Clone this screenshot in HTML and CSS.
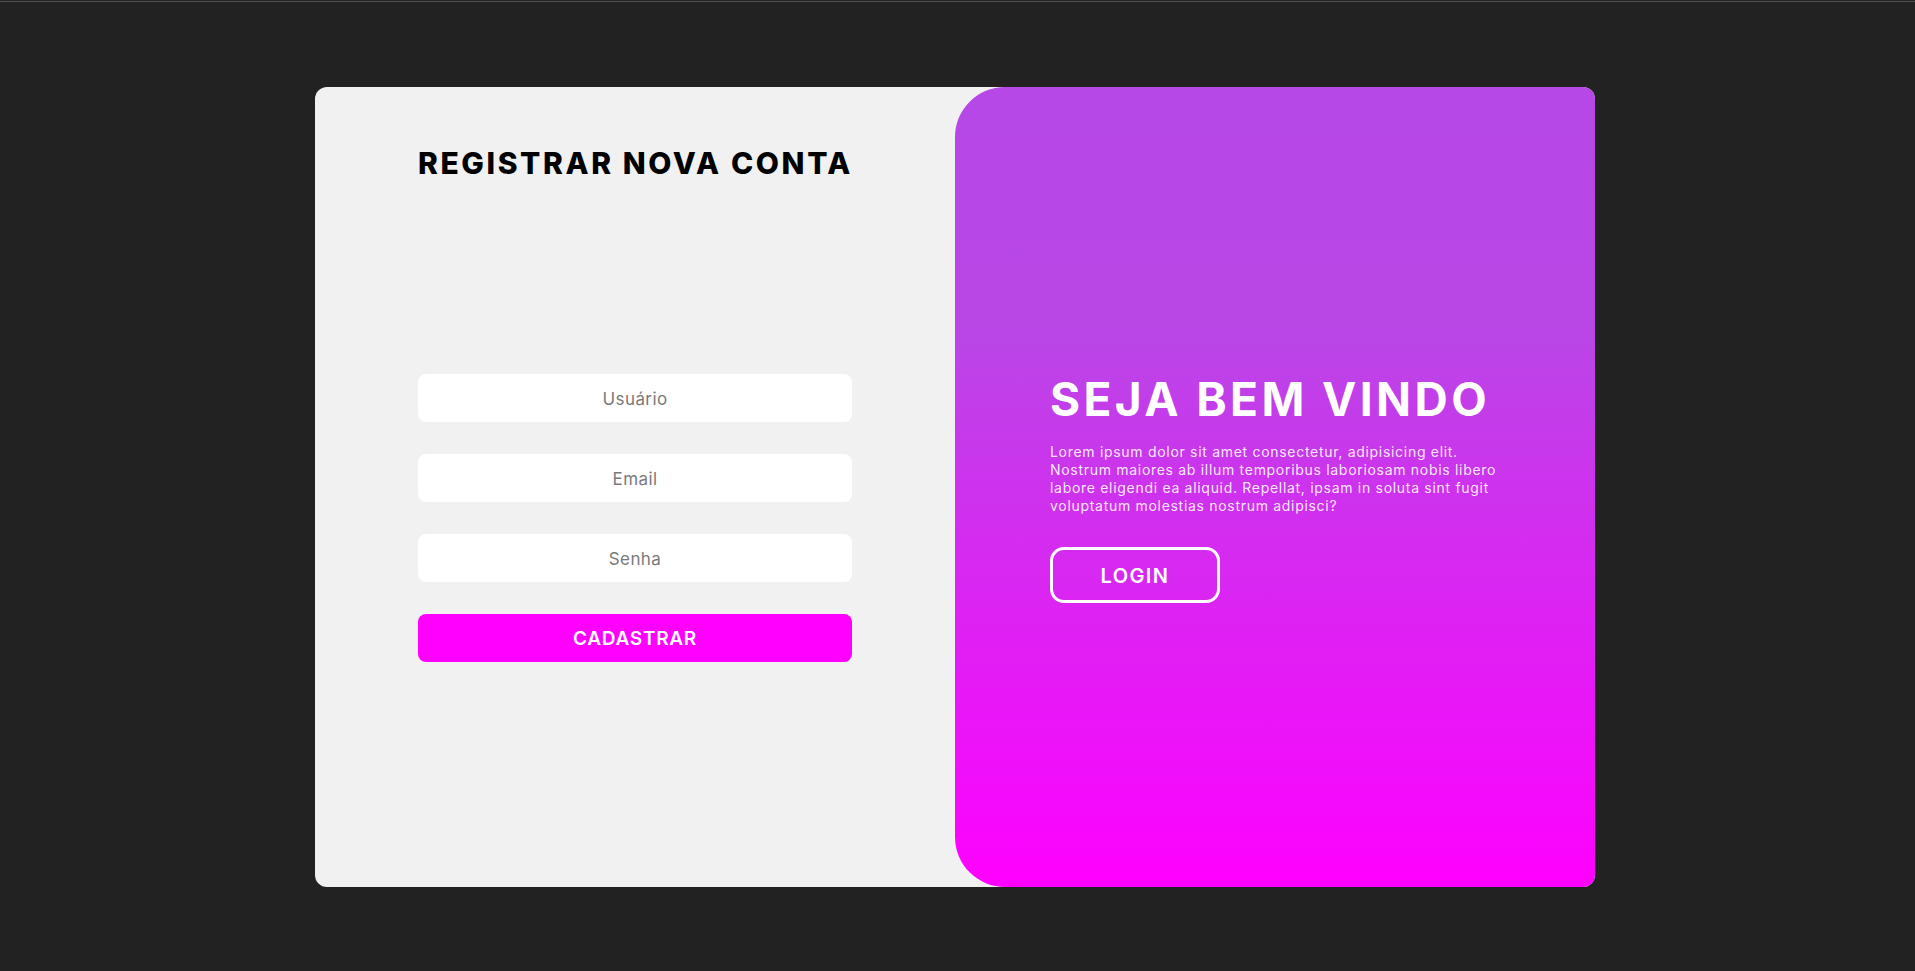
FILE: index.html
```html
<!DOCTYPE html>
<html lang="pt-BR">
<head>
<meta charset="utf-8">
<title>Registrar</title>
<link rel="stylesheet" href="styles.css">
</head>
<body>
<div class="topline"></div>
<main class="page">
  <div class="card">
    <section class="panel-left">
      <h1 class="form-title">REGISTRAR NOVA CONTA</h1>
      <form class="form">
        <input class="field" type="text" placeholder="Usuário">
        <input class="field" type="email" placeholder="Email">
        <input class="field" type="password" placeholder="Senha">
        <button class="btn-primary" type="button">CADASTRAR</button>
      </form>
    </section>
    <section class="panel-right">
      <div class="welcome">
        <h2 class="welcome-title">SEJA BEM VINDO</h2>
        <p class="welcome-text">Lorem ipsum dolor sit amet consectetur, adipisicing elit. Nostrum maiores ab illum temporibus laboriosam nobis libero labore eligendi ea aliquid. Repellat, ipsam in soluta sint fugit voluptatum molestias nostrum adipisci?</p>
        <button class="btn-outline" type="button">LOGIN</button>
      </div>
    </section>
  </div>
</main>
</body>
</html>
```
FILE: styles.css
```css
* { box-sizing: border-box; }

html, body {
  margin: 0;
  padding: 0;
  background: #222222;
  font-family: "Inter", "Open Sans", sans-serif;
  height: 971px;
  overflow: hidden;
}

.topline {
  height: 1px;
  margin-top: 1px;
  background: #505050;
}

.page {
  display: flex;
  justify-content: center;
  padding-top: 85px;
  padding-right: 5px;
}

.card {
  width: 1280px;
  height: 800px;
  border-radius: 12px;
  overflow: hidden;
  background: #f1f1f1;
  display: grid;
  grid-template-columns: 640px 640px;
}

.panel-left {
  display: flex;
  flex-direction: column;
  align-items: center;
  padding-top: 58px;
}

.form-title {
  margin: 0;
  width: 434px;
  text-align: center;
  font-size: 30px;
  font-weight: 800;
  line-height: 36px;
  letter-spacing: 2.6px;
  white-space: nowrap;
  color: #000;
}

.form {
  width: 434px;
  margin-top: 193px;
  display: flex;
  flex-direction: column;
  gap: 32px;
}

.field {
  height: 48px;
  border: none;
  border-radius: 8px;
  background: #fff;
  text-align: center;
  font-family: inherit;
  font-size: 17px;
  padding-top: 2px;
  color: #333;
  outline: none;
}

.field::placeholder {
  color: #7a7a7a;
  letter-spacing: 0.4px;
}

.btn-primary {
  height: 48px;
  border: none;
  border-radius: 8px;
  background: #ff00ff;
  color: #fff;
  font-family: inherit;
  font-size: 19px;
  font-weight: 600;
  letter-spacing: 0.7px;
  cursor: pointer;
}

.panel-right {
  border-radius: 50px 0 0 50px;
  background: linear-gradient(to bottom, #b548e6 0%, #b947e6 30%, #ff00ff 100%);
  display: flex;
  align-items: center;
  justify-content: center;
}

.welcome {
  width: 450px;
  color: #fff;
}

.welcome-title {
  margin: 0;
  font-size: 46px;
  font-weight: 700;
  line-height: 56px;
  letter-spacing: 3.4px;
  white-space: nowrap;
}

.welcome-text {
  margin: 16px 0 0;
  font-size: 14px;
  line-height: 18px;
  letter-spacing: 0.7px;
  color: rgba(255, 255, 255, 0.9);
}

.btn-outline {
  margin-top: 32px;
  width: 170px;
  height: 56px;
  border: 3px solid #fff;
  border-radius: 14px;
  background: transparent;
  color: #fff;
  font-family: inherit;
  font-size: 20px;
  font-weight: 600;
  letter-spacing: 1.4px;
  padding-top: 2px;
  cursor: pointer;
}
```
